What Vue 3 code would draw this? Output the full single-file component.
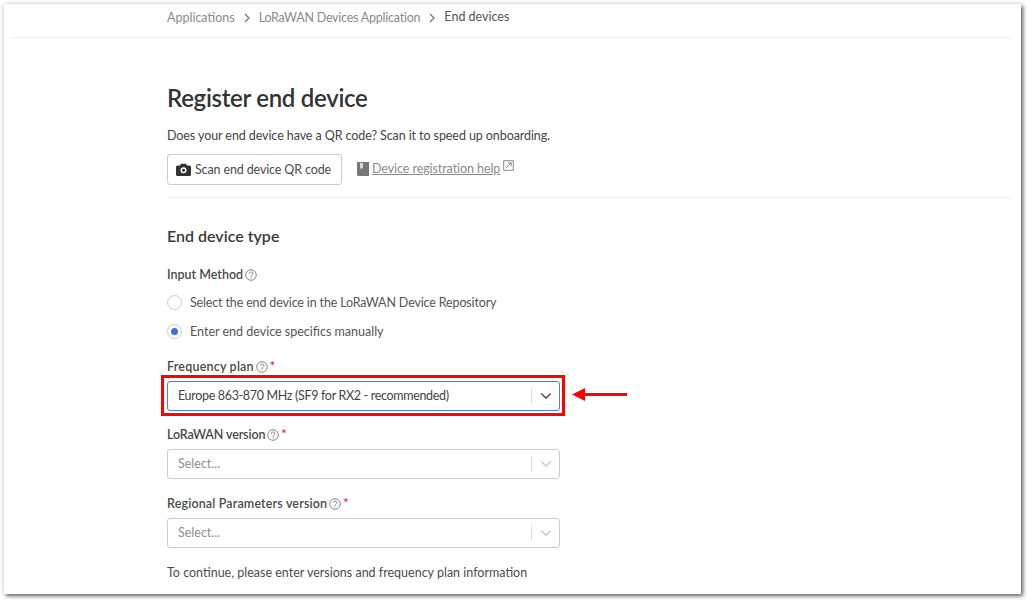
<script setup>
const helpPaths = "M4.300 4.800a1.800 1.800 0 1 1 2.700 1.500c-.7.400-1 .8-1 1.400M6 8.400v1";
</script>

<template>
  <div class="stage">
    <div class="shot">
      <nav class="crumbs">
        <span class="c1">Applications</span>
        <svg class="sep" viewBox="0 0 8 10"><path d="M2 1l4 4-4 4" /></svg>
        <span class="c2">LoRaWAN Devices Application</span>
        <svg class="sep" viewBox="0 0 8 10"><path d="M2 1l4 4-4 4" /></svg>
        <span class="current">End devices</span>
      </nav>
      <main class="content">
        <h1>Register end device</h1>
        <p class="intro">Does your end device have a QR code? Scan it to speed up onboarding.</p>
        <div class="actions">
          <button class="scan" type="button">
            <svg class="cam" viewBox="0 0 15 13">
              <path fill-rule="evenodd" d="M5 .8h5l1 1.700h2.500A1.500 1.500 0 0 1 15 4v7.500a1.500 1.500 0 0 1-1.500 1.500h-12A1.500 1.500 0 0 1 0 11.500V4a1.500 1.500 0 0 1 1.500-1.500H4zM7.500 4.300a3 3 0 1 0 0 6 3 3 0 0 0 0-6z" />
              <circle cx="7.500" cy="7.300" r="1.500" />
            </svg>
            <span class="scan-text">Scan end device QR code</span>
          </button>
          <a class="help">
            <svg class="book" viewBox="0 0 12 14"><path d="M0 0h12v14H1.500A1.500 1.500 0 0 1 0 12.500z" /><path class="band" d="M3 1h3v6l-1.500-1L3 7z" /></svg>
            <span class="link">Device registration help</span>
            <svg class="ext" viewBox="0 0 11 11"><path d="M.7.7h9.600v9.600H.7zM3 8l5-5M5 2.800h3.200V6" /></svg>
          </a>
        </div>
        <hr />
        <h2>End device type</h2>
        <div class="label method">Input Method <svg class="q" viewBox="0 0 12 12"><circle cx="6" cy="6" r="5.300" /><path :d="helpPaths" /></svg></div>
        <label class="radio r1"><span class="dot"></span><span class="rt1">Select the end device in the LoRaWAN Device Repository</span></label>
        <label class="radio on"><span class="dot"></span>Enter end device specifics manually</label>

        <div class="label freq"><span class="lf">Frequency plan</span> <svg class="q" viewBox="0 0 12 12"><circle cx="6" cy="6" r="5.300" /><path :d="helpPaths" /></svg> <span class="req">*</span></div>
        <div class="select focus">
          <span class="value">Europe 863-870 MHz (SF9 for RX2 - recommended)</span>
          <i class="bar"></i>
          <svg class="chev" viewBox="0 0 14 9"><path d="M1.500 1.500L7 7l5.500-5.500" /></svg>
          <span class="highlight"></span>
          <svg class="arrow" viewBox="0 0 55 13"><path d="M0 6.500L13 0v5h42v3H13v5z" /></svg>
        </div>

        <div class="label"><span class="ll">LoRaWAN version</span> <svg class="q" viewBox="0 0 12 12"><circle cx="6" cy="6" r="5.300" /><path :d="helpPaths" /></svg> <span class="req">*</span></div>
        <div class="select">
          <span class="ph">Select...</span>
          <i class="bar"></i>
          <svg class="chev" viewBox="0 0 14 9"><path d="M1.500 1.500L7 7l5.500-5.500" /></svg>
        </div>

        <div class="label regional"><span class="lr">Regional Parameters version</span> <svg class="q" viewBox="0 0 12 12"><circle cx="6" cy="6" r="5.300" /><path :d="helpPaths" /></svg> <span class="req">*</span></div>
        <div class="select">
          <span class="ph">Select...</span>
          <i class="bar"></i>
          <svg class="chev" viewBox="0 0 14 9"><path d="M1.500 1.500L7 7l5.500-5.500" /></svg>
        </div>

        <p class="note">To continue, please enter versions and frequency plan information</p>
      </main>
    </div>
  </div>
</template>

<style>
html, body { margin: 0; background: #fff; overflow: hidden; }
</style>

<style scoped>
.stage {
  width: 1029px;
  height: 602px;
  padding: 4px 8px 8px 4px;
  box-sizing: border-box;
  background: #fff;
  font-family: "Lato", "Noto Sans", sans-serif;
  font-size: 12.500px;
  color: #4c4c4c;
}
.shot {
  height: 100%;
  background: #fff;
  box-shadow: 2px 2px 4px rgba(0, 0, 0, .6), 0 0 5px rgba(0, 0, 0, .14);
  overflow: hidden;
  padding: 0 10px 0 7px;
}
.crumbs {
  height: 34px;
  padding: 6px 0 0 156px;
  box-sizing: border-box;
  border-bottom: 1px solid #eee;
  display: flex;
  align-items: flex-start;
  gap: 8px;
  line-height: 15px;
  color: #8a8a8a;
}
.c2 { letter-spacing: -.23px; }
.current { color: #555; margin-top: -1px; }
.sep { width: 8px; height: 10px; margin-top: 3px; fill: none; stroke: #777; stroke-width: 1.300; }
.content { padding-left: 156px; }
h1 { margin: 44px 0 0; font-size: 24px; line-height: 32px; font-weight: 600; letter-spacing: -.3px; color: #333; }
.intro { margin: 14px 0 0; line-height: 16px; color: #444; letter-spacing: -.085px; }
.actions { display: flex; align-items: center; margin-top: 10px; gap: 15px; }
.scan {
  width: 175px; height: 31px; padding: 0 0 0 8px; display: flex; align-items: center; gap: 4px;
  background: #fff; border: 1px solid #ccc; border-radius: 3px;
  font: inherit; color: #4c4c4c; box-sizing: border-box;
}
.scan-text { letter-spacing: -.13px; }
.cam { width: 15px; height: 13px; fill: #333; }
.help { display: flex; align-items: center; color: #8a8a8a; margin-top: -2px; }
.book { width: 12px; height: 14px; margin-right: 3px; }
.book path { fill: #777; }
.book .band { fill: #d8d8d8; }
.link { text-decoration: underline; letter-spacing: -.08px; }
.ext { width: 11px; height: 11px; margin: -6px 0 0 3px; fill: none; stroke: #888; stroke-width: 1; }
hr { border: 0; border-top: 1px solid #eee; margin: 12px 0 0; }
h2 { margin: 28px 0 0; font-size: 16px; line-height: 20px; font-weight: 600; color: #3a3a3a; }
.label { display: flex; align-items: center; gap: 2px; line-height: 16px; font-weight: 600; color: #4a4a4a; margin-top: 16px; }
.method { margin-top: 21px; }
.freq { margin-top: 20px; }
.regional { margin-top: 17px; }
.lf { letter-spacing: .2px; }
.ll { letter-spacing: -.13px; }
.lr { letter-spacing: .15px; }
.q { width: 12px; height: 12px; fill: none; stroke: #888; stroke-width: 1; }
.req { color: #f22; }
.radio { display: flex; align-items: center; gap: 8px; height: 16px; margin-top: 13px; color: #555; }
.r1 { margin-top: 11px; }
.rt1 { letter-spacing: -.15px; }
.dot { width: 15px; height: 15px; border-radius: 50%; border: 1px solid #ccc; box-sizing: border-box; display: grid; place-items: center; }
.on .dot::after { content: ""; width: 7px; height: 7px; border-radius: 50%; background: #3f6fe0; }
.select {
  position: relative; width: 393px; height: 30px; margin-top: 6px; box-sizing: border-box;
  border: 1px solid #ccc; border-radius: 3px; display: flex; align-items: center; padding: 0 7px 2px 10px;
}
.select.focus { border-color: #4f7fe8; }
.value { color: #444; flex: 1; letter-spacing: -.33px; }
.ph { color: #8f8f8f; flex: 1; }
.bar { width: 1px; height: 16px; background: #ddd; margin: 2px 8px 0 0; }
.chev { width: 12px; height: 8px; margin-top: 2px; fill: none; stroke: #ccc; stroke-width: 1.800; }
.focus .chev { stroke: #555; }
.highlight { position: absolute; left: -7px; top: -7px; width: 404px; height: 41px; border: 3px solid #f00; box-sizing: border-box; pointer-events: none; }
.arrow { position: absolute; left: 404px; top: 6px; width: 55px; height: 13px; fill: #f00; }
.note { margin: 17px 0 0; line-height: 16px; color: #4c4c4c; }
</style>
